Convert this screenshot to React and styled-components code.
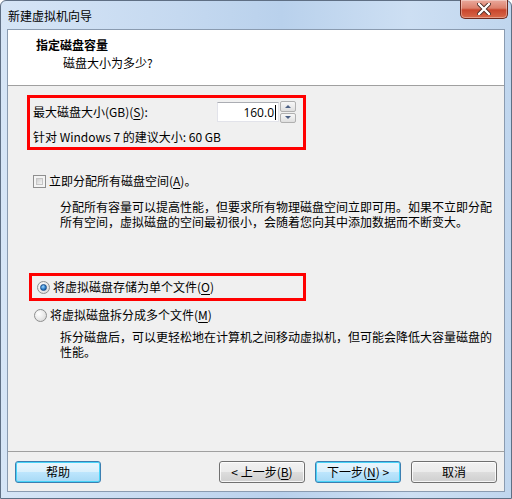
import React from "react";
import styled, { createGlobalStyle } from "styled-components";

const GlobalStyle = createGlobalStyle`
  html, body {
    margin: 0;
    padding: 0;
    background: #ffffff;
  }
  body {
    width: 512px;
    height: 499px;
    overflow: hidden;
    font-family: "Noto Sans CJK SC", "Open Sans", sans-serif;
    font-size: 12px;
    color: #000;
  }
`;

const Window = styled.div`
  width: 512px;
  height: 499px;
  box-sizing: border-box;
  display: flex;
  flex-direction: column;
  border: 1px solid #5f6f84;
  border-radius: 6px 6px 0 0;
  background: linear-gradient(90deg, #d6e5f6 0%, #c5d9f0 35%, #b9d1ec 55%, #cddff3 80%, #c0d6ee 100%);
`;

const TitleBar = styled.div`
  height: 28px;
  display: flex;
  justify-content: space-between;
  align-items: flex-start;
  padding-left: 7px;
`;

const Title = styled.span`
  line-height: 28px;
  margin-top: 1px;
`;

const CloseButton = styled.div`
  width: 48px;
  height: 19px;
  margin-top: -1px;
  margin-right: 3px;
  box-sizing: border-box;
  border: 1px solid #6e2a1f;
  border-top: none;
  border-radius: 0 0 5px 5px;
  background: linear-gradient(180deg, #eaa99c 0%, #dc806c 45%, #c9462d 55%, #d8694a 100%);
  box-shadow: inset 0 0 0 1px rgba(255, 255, 255, 0.35);
  display: flex;
  align-items: center;
  justify-content: center;
`;

const Client = styled.div`
  flex: 1;
  display: flex;
  flex-direction: column;
  margin: 0 6px 6px 6px;
  border: 1px solid #8a9bb0;
  background: #f0f0f0;
`;

const Header = styled.div`
  height: 56px;
  box-sizing: border-box;
  background: #ffffff;
  border-bottom: 1px solid #a0a0a0;
  padding-top: 7px;
`;

const Heading = styled.div`
  font-weight: bold;
  line-height: 16px;
  padding-left: 28px;
`;

const SubHeading = styled.div`
  line-height: 16px;
  margin-top: 2px;
  padding-left: 55px;
`;

const Body = styled.div`
  flex: 1;
  display: flex;
  flex-direction: column;
  align-items: flex-start;
  padding-left: 19px;
`;

const Highlight = styled.div`
  box-sizing: border-box;
  border: 3px solid #ff0000;
  width: ${(p) => p.$width}px;
  margin-top: ${(p) => p.$top}px;
  margin-left: ${(p) => p.$left || 0}px;
  padding: ${(p) => p.$pad};
`;

const SizeRow = styled.div`
  display: flex;
  align-items: center;
  height: 22px;
`;

const Label = styled.span`
  flex: 1;
  line-height: 16px;
`;

const TextBox = styled.div`
  width: 62px;
  height: 20px;
  box-sizing: border-box;
  background: #fff;
  border: 1px solid #e2e3ea;
  border-top-color: #abadb3;
  display: flex;
  align-items: center;
  justify-content: flex-end;
  padding-right: 2px;
  font-family: "Open Sans", "Noto Sans CJK SC", sans-serif;
  font-size: 12px;
`;

const Caret = styled.span`
  display: inline-block;
  width: 1px;
  height: 15px;
  background: #000;
  margin-left: 1px;
`;

const Spinner = styled.div`
  width: 16px;
  height: 22px;
  display: flex;
  flex-direction: column;
  gap: 1px;
  margin-left: 1px;
`;

const SpinButton = styled.div`
  flex: 1;
  box-sizing: border-box;
  border: 1px solid #b0b0b0;
  border-radius: 2px;
  background: linear-gradient(180deg, #f7f7f7 0%, #ececec 50%, #dedede 100%);
  display: flex;
  align-items: center;
  justify-content: center;
`;

const Arrow = styled.span`
  width: 0;
  height: 0;
  border-left: 3px solid transparent;
  border-right: 3px solid transparent;
  ${(p) =>
    p.$down
      ? "border-top: 3px solid #4d6185;"
      : "border-bottom: 3px solid #4d6185;"}
`;

const Hint = styled.div`
  margin-top: 6px;
  line-height: 16px;
`;

const OptionRow = styled.div`
  display: flex;
  align-items: center;
  height: ${(p) => p.$height || 16}px;
  margin-top: ${(p) => p.$top || 0}px;
  margin-left: ${(p) => p.$left || 0}px;
  gap: 3px;
  line-height: 16px;
`;

const CheckBox = styled.span`
  width: 13px;
  height: 13px;
  box-sizing: border-box;
  border: 1px solid #8f8f8f;
  background: #f4f4f4;
  padding: 2px;
  display: inline-flex;
  &::after {
    content: "";
    flex: 1;
    background: linear-gradient(135deg, #cfcfcf 0%, #e6e6e6 60%, #f6f6f6 100%);
    border: 1px solid #c5c5c5;
  }
`;

const Radio = styled.span`
  width: 13px;
  height: 13px;
  box-sizing: border-box;
  border-radius: 50%;
  border: 1px solid #8e8f8f;
  background: radial-gradient(circle at 35% 35%, #ffffff 0%, #e8e8e8 55%, #cfcfcf 100%);
  display: inline-flex;
  align-items: center;
  justify-content: center;
  &::after {
    content: "";
    width: 5px;
    height: 5px;
    border-radius: 50%;
    display: ${(p) => (p.$checked ? "block" : "none")};
    background: radial-gradient(circle at 40% 35%, #9fd6ff 0%, #2a7cc7 55%, #0f3f80 100%);
    border: 1px solid #1b4f8a;
  }
`;

const Description = styled.div`
  width: 436px;
  margin-top: ${(p) => p.$top}px;
  margin-left: 33px;
  line-height: 15px;
`;

const Key = styled.span`
  text-decoration: underline;
  text-underline-offset: 2px;
`;

const Footer = styled.div`
  height: 40px;
  box-sizing: border-box;
  border-top: 1px solid #a0a0a0;
  display: flex;
  align-items: flex-start;
  gap: 10px;
  padding: 9px 7px 0 7px;
`;

const Spacer = styled.div`
  flex: 1;
`;

const Button = styled.div`
  width: 86px;
  height: 22px;
  box-sizing: border-box;
  border: 1px solid ${(p) => (p.$focus ? "#3c7fb1" : "#707070")};
  border-radius: 3px;
  background: ${(p) =>
    p.$focus
      ? "linear-gradient(180deg, #eaf6fd 0%, #d9f0fc 50%, #bee6fd 50%, #a7d9f5 100%)"
      : "linear-gradient(180deg, #f2f2f2 0%, #ebebeb 50%, #dddddd 50%, #cfcfcf 100%)"};
  box-shadow: inset 0 0 0 1px ${(p) => (p.$focus ? "#48d4f8" : "rgba(255,255,255,0.8)")};
  display: flex;
  align-items: center;
  justify-content: center;
  line-height: 16px;
  white-space: pre;
`;

export default function App() {
  return (
    <>
      <GlobalStyle />
      <Window>
        <TitleBar>
          <Title>新建虚拟机向导</Title>
          <CloseButton>
            <svg width="14" height="12" viewBox="0 0 14 12">
              <path
                d="M2 1 L12 11 M12 1 L2 11"
                stroke="#4a2a24"
                strokeWidth="4"
                strokeLinecap="round"
              />
              <path
                d="M2 1 L12 11 M12 1 L2 11"
                stroke="#ffffff"
                strokeWidth="2.4"
                strokeLinecap="round"
              />
            </svg>
          </CloseButton>
        </TitleBar>
        <Client>
          <Header>
            <Heading>指定磁盘容量</Heading>
            <SubHeading>磁盘大小为多少?</SubHeading>
          </Header>
          <Body>
            <Highlight $width={279} $top={9} $pad="3px 7px 2px 3px">
              <SizeRow>
                <Label>
                  最大磁盘大小(GB)(<Key>S</Key>):
                </Label>
                <TextBox>
                  160.0
                  <Caret />
                </TextBox>
                <Spinner>
                  <SpinButton>
                    <Arrow />
                  </SpinButton>
                  <SpinButton>
                    <Arrow $down />
                  </SpinButton>
                </Spinner>
              </SizeRow>
              <Hint>针对 Windows 7 的建议大小: 60 GB</Hint>
            </Highlight>

            <OptionRow $top={23} $left={6}>
              <CheckBox />
              <span>
                立即分配所有磁盘空间(<Key>A</Key>)。
              </span>
            </OptionRow>
            <Description $top={10}>
              分配所有容量可以提高性能，但要求所有物理磁盘空间立即可用。如果不立即分配所有空间，虚拟磁盘的空间最初很小，会随着您向其中添加数据而不断变大。
            </Description>

            <Highlight $width={277} $top={44} $left={2} $pad="0 0 0 2px">
              <OptionRow $height={22} $left={3}>
                <Radio $checked />
                <span>
                  将虚拟磁盘存储为单个文件(<Key>O</Key>)
                </span>
              </OptionRow>
            </Highlight>
            <OptionRow $top={6} $left={7}>
              <Radio />
              <span>
                将虚拟磁盘拆分成多个文件(<Key>M</Key>)
              </span>
            </OptionRow>
            <Description $top={6}>
              拆分磁盘后，可以更轻松地在计算机之间移动虚拟机，但可能会降低大容量磁盘的性能。
            </Description>
          </Body>
          <Footer>
            <Button $focus>帮助</Button>
            <Spacer />
            <Button>
              {"< 上一步("}<Key>B</Key>{")"}
            </Button>
            <Button $focus>
              {"下一步("}<Key>N</Key>{") >"}
            </Button>
            <Button>取消</Button>
          </Footer>
        </Client>
      </Window>
    </>
  );
}
